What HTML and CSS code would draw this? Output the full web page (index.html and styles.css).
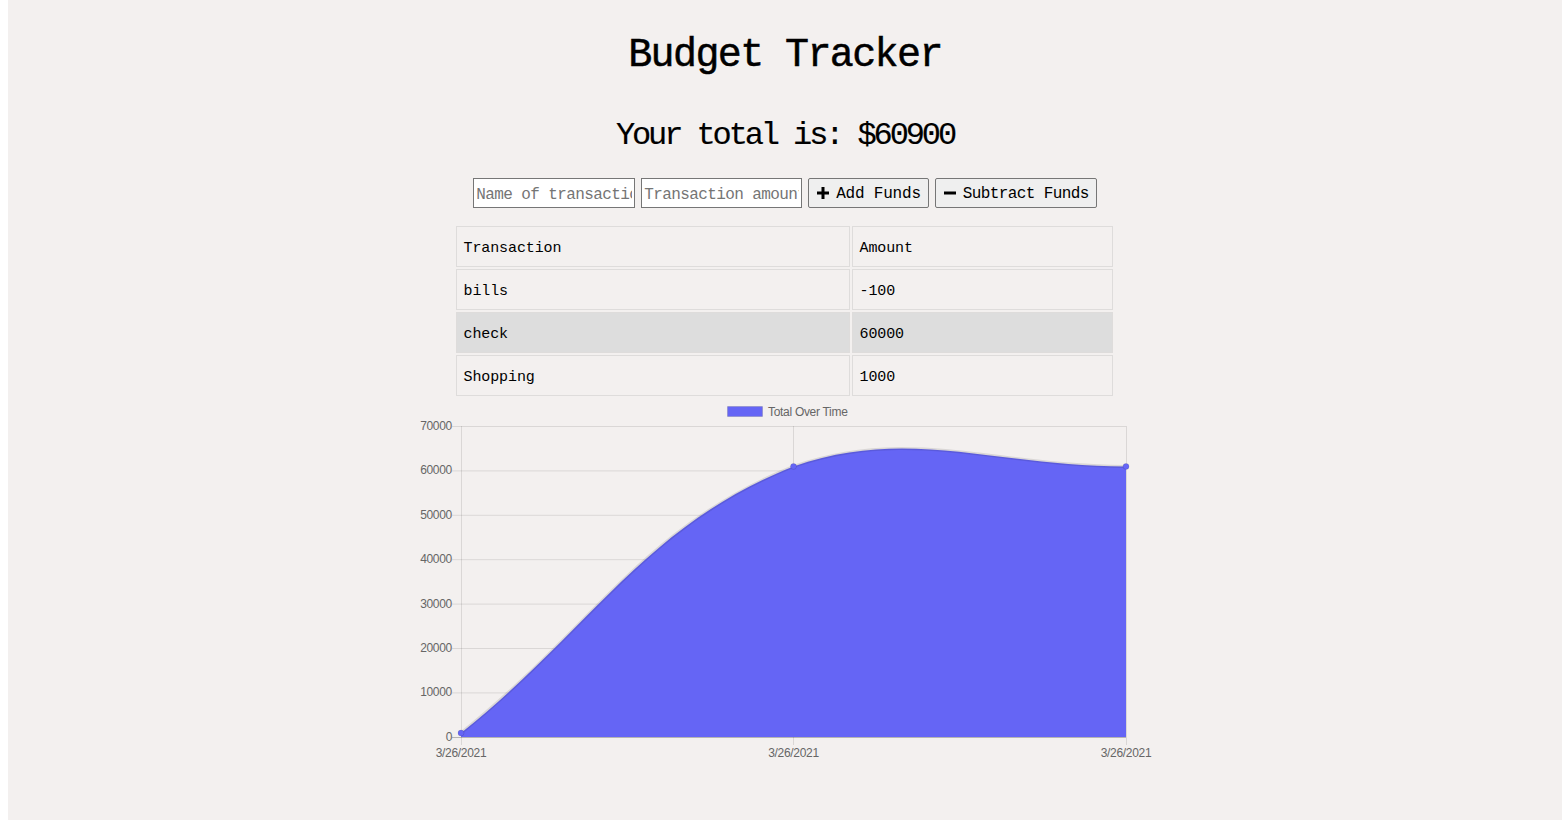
FILE: index.html
```html
<!DOCTYPE html>
<html>
<head>
<meta charset="utf-8">
<title>Budget Tracker</title>
<link rel="stylesheet" href="styles.css">
</head>
<body>
<div class="page">
  <h1 class="title">Budget Tracker</h1>
  <h2 class="total">Your total is: $<span id="total">60900</span></h2>
  <form class="form">
    <input class="field" type="text" placeholder="Name of transaction">
    <input class="field" type="number" placeholder="Transaction amount">
    <button type="button" class="btn"><svg class="ico" viewBox="0 0 12 12"><path d="M4.5 0h3v4.5H12v3H7.5V12h-3V7.5H0v-3h4.5z"/></svg>Add Funds</button>
    <button type="button" class="btn btn-sub"><svg class="ico" viewBox="0 0 12 12"><path d="M0 4.5h12v3H0z"/></svg>Subtract Funds</button>
  </form>
  <table class="tx">
    <thead>
      <tr><th class="c-name">Transaction</th><th class="c-amt">Amount</th></tr>
    </thead>
    <tbody>
      <tr><td>bills</td><td>-100</td></tr>
      <tr class="alt"><td>check</td><td>60000</td></tr>
      <tr><td>Shopping</td><td>1000</td></tr>
    </tbody>
  </table>
  <svg class="chart" width="740" height="370" viewBox="415 398 740 370">
    <rect x="727.5" y="406.5" width="35" height="10" fill="#6565f5" stroke="rgba(0,0,0,0.12)" stroke-width="1"/>
    <text class="lbl" x="768" y="415.5">Total Over Time</text>
    <g stroke="rgba(0,0,0,0.1)" stroke-width="1" fill="none">
      <path d="M452 426.5H1126M452 470.9H1126M452 515.3H1126M452 559.7H1126M452 604.1H1126M452 648.5H1126M452 692.9H1126"/>
      <path d="M793.5 426V745M1126.5 426V745"/>
      <path d="M461.5 426V745"/>
    </g>
    <path d="M461 733 C594 626.2 644 526 793.5 466.4 C910 426 993 466.4 1126 466.4 L1126 737 L461 737 Z" fill="#6565f5"/>
    <path d="M461 733 C594 626.2 644 526 793.5 466.4 C910 426 993 466.4 1126 466.4" fill="none" stroke="rgba(0,0,0,0.1)" stroke-width="3"/>
    <path d="M452 737.5H1126" stroke="rgba(0,0,0,0.25)" stroke-width="1"/>
    <g fill="#6565f5" stroke="rgba(0,0,0,0.1)" stroke-width="1">
      <circle cx="461" cy="733" r="3"/>
      <circle cx="793.5" cy="466.4" r="3"/>
      <circle cx="1126" cy="466.4" r="3"/>
    </g>
    <g class="lbl" text-anchor="end">
      <text x="452" y="430">70000</text>
      <text x="452" y="474.4">60000</text>
      <text x="452" y="518.8">50000</text>
      <text x="452" y="563.2">40000</text>
      <text x="452" y="607.6">30000</text>
      <text x="452" y="652">20000</text>
      <text x="452" y="696.4">10000</text>
      <text x="452" y="741">0</text>
    </g>
    <g class="lbl" text-anchor="middle">
      <text x="461" y="756.5">3/26/2021</text>
      <text x="793.5" y="756.5">3/26/2021</text>
      <text x="1126" y="756.5">3/26/2021</text>
    </g>
  </svg>
</div>
</body>
</html>
```

FILE: styles.css
```css
html { background: #ffffff; }
body {
  margin: 0;
  font-family: "Liberation Mono", "DejaVu Sans Mono", monospace;
  color: #000;
}
.page {
  margin: 0 4px 0 8px;
  height: 788px;
  padding-top: 32px;
  background: #f3f0ef;
  text-align: center;
}
.title {
  margin: 0;
  font-size: 40px;
  line-height: 48px;
  font-weight: normal;
  letter-spacing: -1.6px;
  -webkit-text-stroke: 0.5px #000;
}
.total {
  margin: 36px 0 0;
  font-size: 32px;
  line-height: 40px;
  font-weight: normal;
  letter-spacing: -3.1px;
  -webkit-text-stroke: 0.15px #000;
}
.form {
  margin: 22px 0 0;
  display: flex;
  justify-content: center;
  gap: 6px;
  height: 30px;
}
.field {
  box-sizing: border-box;
  width: 162px;
  height: 30px;
  margin: 0;
  padding: 3px 2px 0;
  border: 1px solid #767676;
  border-radius: 0;
  background: #fff;
  font-family: "Liberation Mono", monospace;
  font-size: 16px;
  letter-spacing: -0.6px;
  color: #000;
}
.field + .field { width: 161px; }
.field::placeholder { color: #757575; }
.field::-webkit-outer-spin-button,
.field::-webkit-inner-spin-button { -webkit-appearance: none; margin: 0; }
.btn {
  box-sizing: border-box;
  height: 30px;
  margin: 0;
  padding: 2px 7px 0 8px;
  display: flex;
  align-items: center;
  gap: 7px;
  border: 1px solid #767676;
  border-radius: 2px;
  background: #efefef;
  font-family: "Liberation Mono", monospace;
  font-size: 16px;
  letter-spacing: -0.2px;
  color: #000;
}
.btn-sub { letter-spacing: -0.6px; }
.ico { width: 12px; height: 12px; fill: #000; flex: none; margin-top: -2px; }
.tx {
  margin: 16px auto 0;
  width: 661px;
  table-layout: fixed;
  border-spacing: 2px;
  text-align: left;
  font-size: 15px;
  letter-spacing: -0.1px;
  position: relative;
  left: -1px;
}
.tx th, .tx td {
  box-sizing: border-box;
  padding: 10px 7px 6px;
  line-height: 23px;
  border: 1px solid #dedcdb;
  font-weight: normal;
}
.tx .c-name { width: 394px; }
.tx .c-amt { width: 261px; }
.tx .alt td { background: #dddddd; }
.chart {
  display: block;
  margin: 0 auto;
}
.lbl {
  font-family: "Liberation Sans", Arial, sans-serif;
  font-size: 12px;
  letter-spacing: -0.3px;
  fill: #666;
}
```
